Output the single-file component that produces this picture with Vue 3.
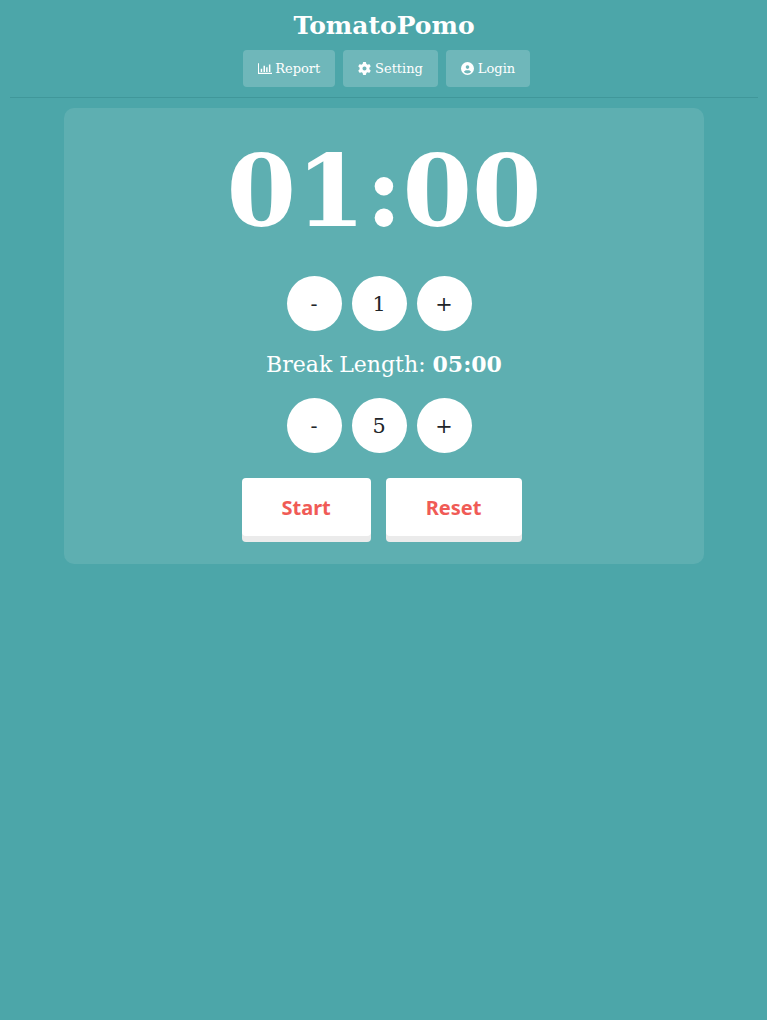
<script setup>
import { ref, computed } from 'vue'

const session = ref(1)
const rest = ref(5)
const format = (m) => String(m).padStart(2, '0') + ':00'
const timer = computed(() => format(session.value))
const restTime = computed(() => format(rest.value))
const change = (target, by) => {
  if (target === 'session') session.value = Math.max(1, session.value + by)
  else rest.value = Math.max(1, rest.value + by)
}
const reset = () => {
  session.value = 1
  rest.value = 5
}
</script>

<template>
  <div class="page">
    <header class="header">
      <h1 class="title">TomatoPomo</h1>
      <nav class="nav">
        <button class="nav-btn report">
          <svg class="chart" viewBox="0 0 14 11"><path d="M0 0.300h1v9.400h13v1.200H0zM2.700 5.800h1.500v3.200h-1.500zM5.500 2.800h1.500v6.200h-1.500zM8.100 4.200h1.500v4.800h-1.500zM10.900 1.500h1.500v7.500h-1.500z" /></svg>
          <span>Report</span>
        </button>
        <button class="nav-btn setting">
          <svg class="icon" viewBox="0 0 512 512"><path d="M495.9 166.600c3.200 8.700 .5 18.400-6.400 24.600l-43.300 39.400c1.100 8.300 1.700 16.800 1.700 25.400s-.6 17.100-1.700 25.400l43.300 39.400c6.900 6.200 9.600 15.900 6.400 24.600c-4.400 11.900-9.700 23.300-15.800 34.300l-4.700 8.100c-6.600 11-14 21.400-22.100 31.200c-5.900 7.200-15.700 9.600-24.500 6.800l-55.700-17.700c-13.400 10.300-28.200 18.900-44 25.400l-12.500 57.100c-2 9.100-9 16.300-18.200 17.800c-13.800 2.300-28 3.500-42.500 3.500s-28.700-1.200-42.500-3.500c-9.200-1.500-16.200-8.700-18.200-17.800l-12.500-57.100c-15.800-6.500-30.600-15.100-44-25.400L83.100 425.900c-8.800 2.800-18.600 .3-24.500-6.800c-8.100-9.800-15.500-20.200-22.100-31.200l-4.700-8.100c-6.100-11-11.400-22.400-15.800-34.300c-3.200-8.700-.5-18.400 6.400-24.600l43.300-39.400C64.600 273.100 64 264.600 64 256s.6-17.100 1.700-25.400L22.400 191.200c-6.900-6.200-9.600-15.900-6.400-24.600c4.400-11.900 9.700-23.300 15.800-34.300l4.700-8.100c6.600-11 14-21.400 22.100-31.200c5.900-7.200 15.700-9.600 24.500-6.800l55.700 17.700c13.400-10.300 28.200-18.900 44-25.400l12.500-57.100c2-9.100 9-16.300 18.200-17.800C227.300 1.200 241.500 0 256 0s28.700 1.200 42.500 3.500c9.200 1.500 16.200 8.700 18.200 17.800l12.500 57.100c15.800 6.500 30.600 15.100 44 25.400l55.700-17.700c8.800-2.800 18.600-.3 24.500 6.800c8.100 9.800 15.500 20.200 22.100 31.200l4.700 8.100c6.100 11 11.400 22.400 15.800 34.300zM256 336a80 80 0 1 0 0-160 80 80 0 1 0 0 160z" /></svg>
          <span>Setting</span>
        </button>
        <button class="nav-btn login">
          <svg class="icon" viewBox="0 0 512 512"><path d="M399 384.200C376.900 345.800 335.400 320 288 320H224c-47.400 0-88.900 25.800-111 64.200c35.200 39.200 86.200 63.800 143 63.800s107.800-24.700 143-63.800zM0 256a256 256 0 1 1 512 0A256 256 0 1 1 0 256zm256 16a72 72 0 1 0 0-144 72 72 0 1 0 0 144z" /></svg>
          <span>Login</span>
        </button>
      </nav>
    </header>

    <main class="card">
      <div class="timer">{{ timer }}</div>
      <div class="stepper">
        <button class="round" @click="change('session', -1)">-</button>
        <div class="round">{{ session }}</div>
        <button class="round" @click="change('session', 1)">+</button>
      </div>
      <p class="break">Break Length: <b>{{ restTime }}</b></p>
      <div class="stepper">
        <button class="round" @click="change('rest', -1)">-</button>
        <div class="round">{{ rest }}</div>
        <button class="round" @click="change('rest', 1)">+</button>
      </div>
      <div class="actions">
        <button class="action start">Start</button>
        <button class="action reset" @click="reset">Reset</button>
      </div>
    </main>
  </div>
</template>

<style>
body {
  background: #4ca6a9;
}
</style>

<style scoped>
.page {
  box-sizing: border-box;
  min-height: 1020px;
  padding: 0 9px 0 10px;
  color: #fff;
  font-family: "DejaVu Serif", serif;
}
button {
  border: 0;
  padding: 0;
  font-family: inherit;
  cursor: pointer;
}
.header {
  box-sizing: border-box;
  height: 98px;
  border-bottom: 1px solid #40979a;
}
.title {
  margin: 0;
  height: 50px;
  line-height: 51px;
  font-size: 25px;
  text-align: center;
}
.nav {
  display: flex;
  justify-content: center;
  gap: 8px;
  padding-left: 5px;
}
.nav-btn {
  display: flex;
  align-items: center;
  justify-content: center;
  gap: 4px;
  height: 37px;
  border-radius: 4px;
  background: rgba(255, 255, 255, 0.2);
  color: #fff;
  font-size: 13px;
}
.report {
  width: 92px;
  gap: 3.5px;
}
.setting { width: 95px; }
.login { width: 84px; }
.icon {
  width: 13px;
  height: 13px;
  fill: #fff;
}
.chart {
  width: 14px;
  height: 11px;
  margin-bottom: 1px;
  fill: #fff;
}
.card {
  box-sizing: border-box;
  width: 640px;
  height: 456px;
  margin: 10px auto 0;
  padding-top: 20px;
  border-radius: 10px;
  background: rgba(255, 255, 255, 0.1);
}
.timer {
  height: 148px;
  line-height: 126px;
  font-size: 100px;
  font-weight: bold;
  text-align: center;
}
.stepper {
  display: flex;
  justify-content: center;
  gap: 10px;
  padding-right: 9px;
}
.round {
  box-sizing: border-box;
  display: flex;
  align-items: center;
  justify-content: center;
  width: 55px;
  height: 55px;
  padding-right: 1px;
  border-radius: 50%;
  background: #fff;
  color: #212529;
  font-size: 20.8px;
}
.break {
  margin: 0;
  height: 67px;
  line-height: 67px;
  font-size: 22px;
  text-align: center;
}
.actions {
  display: flex;
  justify-content: center;
  gap: 15px;
  margin-top: 25px;
  padding-right: 4px;
}
.action {
  height: 58px;
  padding-right: 1px;
  border-radius: 4px;
  background: #fff;
  box-shadow: #ebebeb 0 6px 0;
  color: #f05b56;
  font-family: "Noto Sans", sans-serif;
  font-size: 20px;
  font-weight: bold;
}
.start { width: 129px; }
.reset { width: 135.7px; }
</style>
